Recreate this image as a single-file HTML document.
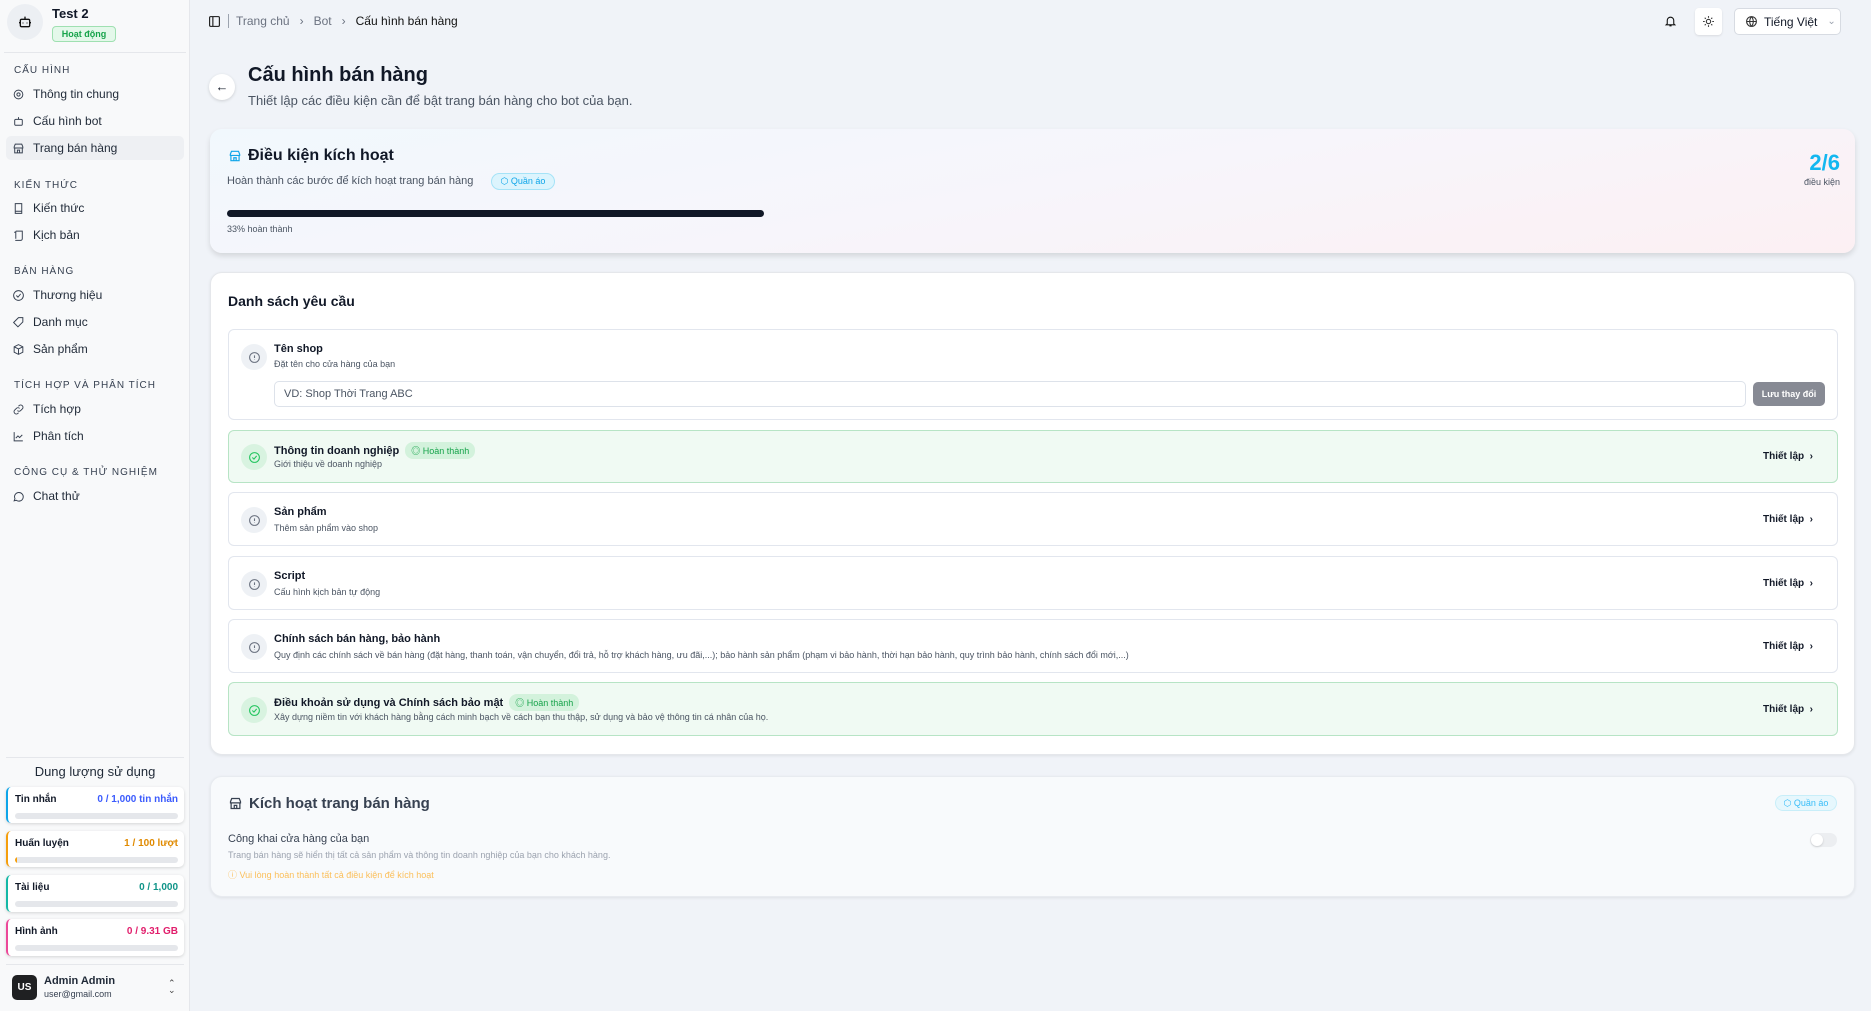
<!DOCTYPE html>
<html><head><meta charset="utf-8"><style>
*{box-sizing:border-box;margin:0;padding:0}
body{width:1871px;height:1011px;overflow:hidden;background:#f0f3f8;font-family:"Liberation Sans","Noto Sans CJK SC",sans-serif;color:#111827;position:relative}
.a{position:absolute}
.sb{left:0;top:0;width:190px;height:1011px;background:#f8f9fa;border-right:1px solid #e5e7eb}
.sec{position:absolute;left:14px;font-size:10px;letter-spacing:1px;color:#374151}
.it{position:absolute;left:12px;font-size:12px;color:#1f2937;display:flex;align-items:center;gap:8px}
.it svg{width:13px;height:13px;stroke:#374151;fill:none;stroke-width:1.8}
.ub{position:absolute;left:6px;width:178px;background:#fff;border-radius:5px;box-shadow:0 1px 3px rgba(0,0,0,.15);padding:7px 6px 0 7px}
.ub .r{display:flex;justify-content:space-between;font-size:10px;font-weight:bold}
.ub .t{height:6px;background:#e5e7eb;border-radius:3px;margin-top:8px}
.card{background:#fff;border:1px solid #e5e7eb;border-radius:12px}
.row{position:absolute;left:228px;width:1610px;border:1px solid #e2e6ee;border-radius:6px;background:#fff}
.row.g{background:#f0faf3;border-color:#b7e4c5}
.ic{position:absolute;left:12px;width:26px;height:26px;border-radius:50%;background:#eef1f5;display:flex;align-items:center;justify-content:center}
.g .ic{background:#d8f3e0}
.rt{position:absolute;left:45px;font-size:11px;font-weight:bold;display:flex;align-items:center;gap:6px}
.rs{position:absolute;left:45px;font-size:9px;color:#4b5563}
.tl{position:absolute;right:24px;font-size:10px;font-weight:bold;color:#111827}
.hb{font-size:9px;font-weight:normal;color:#16a34a;background:#d3f2dc;border-radius:8px;padding:2px 6px}
</style></head><body>
<div class="a sb"></div>
<div class="a" style="left:7px;top:4px;width:36px;height:36px;border-radius:50%;background:#eceff3;display:flex;align-items:center;justify-content:center">
<svg width="16" height="16" viewBox="0 0 24 24" fill="none" stroke="#111" stroke-width="2"><rect x="5" y="8" width="14" height="11" rx="2"/><path d="M12 4v4M9 13v1M15 13v1M3 13h2M19 13h2"/></svg></div>
<div class="a" style="left:52px;top:6px;font-size:13px;font-weight:bold">Test 2</div>
<div class="a" style="left:52px;top:26px;width:64px;height:16px;border:1px solid #9fe0b1;background:#e4f8ea;border-radius:4px;font-size:9px;font-weight:bold;color:#16a34a;text-align:center;line-height:14px">Hoạt động</div>
<div class="a" style="left:4px;top:52px;width:182px;height:1px;background:#e5e7eb"></div>
<div class="sec" style="top:65px">CẤU HÌNH</div>
<div class="it" style="top:87px"><svg viewBox="0 0 24 24"><circle cx="12" cy="12" r="3"/><circle cx="12" cy="12" r="8"/></svg>Thông tin chung</div>
<div class="it" style="top:114px"><svg viewBox="0 0 24 24"><rect x="5" y="8" width="14" height="11" rx="2"/><path d="M12 4v4"/></svg>Cấu hình bot</div>
<div class="a" style="left:6px;top:136px;width:178px;height:24px;background:#eef0f3;border-radius:5px"></div>
<div class="it" style="top:141px"><svg viewBox="0 0 24 24"><path d="M4 9l2-5h12l2 5v2H4zM5 11v9h14v-9M10 20v-5h4v5"/></svg>Trang bán hàng</div>
<div class="sec" style="top:180px">KIẾN THỨC</div>
<div class="it" style="top:201px"><svg viewBox="0 0 24 24"><path d="M6 3h12v18H6zM6 17h12"/></svg>Kiến thức</div>
<div class="it" style="top:228px"><svg viewBox="0 0 24 24"><path d="M7 4h12v14a3 3 0 0 1-3 3H6M7 4v14M4 6h3"/></svg>Kịch bản</div>
<div class="sec" style="top:266px">BÁN HÀNG</div>
<div class="it" style="top:288px"><svg viewBox="0 0 24 24"><circle cx="12" cy="12" r="9"/><path d="M8 12l3 3 5-6"/></svg>Thương hiệu</div>
<div class="it" style="top:315px"><svg viewBox="0 0 24 24"><path d="M3 12l9-9h8v8l-9 9z"/></svg>Danh mục</div>
<div class="it" style="top:342px"><svg viewBox="0 0 24 24"><path d="M12 3l8 4v10l-8 4-8-4V7zM4 7l8 4 8-4M12 11v10"/></svg>Sản phẩm</div>
<div class="sec" style="top:380px">TÍCH HỢP VÀ PHÂN TÍCH</div>
<div class="it" style="top:402px"><svg viewBox="0 0 24 24"><path d="M10 14a4 4 0 0 0 6 0l3-3a4 4 0 0 0-6-6l-1 1M14 10a4 4 0 0 0-6 0l-3 3a4 4 0 0 0 6 6l1-1"/></svg>Tích hợp</div>
<div class="it" style="top:429px"><svg viewBox="0 0 24 24"><path d="M4 4v16h16M7 15l4-4 3 3 5-5"/></svg>Phân tích</div>
<div class="sec" style="top:467px">CÔNG CỤ &amp; THỬ NGHIỆM</div>
<div class="it" style="top:489px"><svg viewBox="0 0 24 24"><path d="M4 20l1.5-4A8 8 0 1 1 8 19z"/></svg>Chat thử</div>

<div class="a" style="left:6px;top:757px;width:178px;height:1px;background:#e5e7eb"></div>
<div class="a" style="left:0;width:190px;top:764px;text-align:center;font-size:13px;color:#1f2937">Dung lượng sử dụng</div>
<div class="ub" style="top:787px;height:36px;border-left:2px solid #0ea5e9"><div class="r"><span>Tin nhắn</span><span style="color:#3b5bfd">0 / 1,000 tin nhắn</span></div><div class="t"></div></div>
<div class="ub" style="top:831px;height:36px;border-left:2px solid #f59e0b"><div class="r"><span>Huấn luyện</span><span style="color:#e08a00">1 / 100 lượt</span></div><div class="t" style="background:linear-gradient(90deg,#f59e0b 2px,#e5e7eb 2px)"></div></div>
<div class="ub" style="top:875px;height:37px;border-left:2px solid #14b8a6"><div class="r"><span>Tài liệu</span><span style="color:#0f9488">0 / 1,000</span></div><div class="t"></div></div>
<div class="ub" style="top:919px;height:37px;border-left:2px solid #ec4899"><div class="r"><span>Hình ảnh</span><span style="color:#e11d6b">0 / 9.31 GB</span></div><div class="t"></div></div>
<div class="a" style="left:6px;top:964px;width:178px;height:1px;background:#e5e7eb"></div>
<div class="a" style="left:12px;top:975px;width:25px;height:25px;border-radius:5px;background:#1f2022;color:#fff;font-size:10px;font-weight:bold;text-align:center;line-height:25px">US</div>
<div class="a" style="left:44px;top:975px;font-size:11px;font-weight:bold;color:#1f2937">Admin Admin</div>
<div class="a" style="left:44px;top:989px;font-size:9px;color:#374151">user@gmail.com</div>
<div class="a" style="left:168px;top:980px;font-size:9px;color:#444;line-height:7px">⌃<br>⌄</div>

<!-- top bar -->
<svg class="a" style="left:208px;top:15px" width="13" height="13" viewBox="0 0 24 24" fill="none" stroke="#111" stroke-width="2"><rect x="3" y="3" width="18" height="18" rx="2"/><path d="M9 3v18"/></svg>
<div class="a" style="left:228px;top:14px;width:1px;height:14px;background:#9ca3af"></div>
<div class="a" style="left:236px;top:14px;font-size:12px;color:#6b7280">Trang chủ &nbsp;&nbsp;›&nbsp;&nbsp; Bot &nbsp;&nbsp;›&nbsp;&nbsp; <span style="color:#111">Cấu hình bán hàng</span></div>
<svg class="a" style="left:1664px;top:14px" width="13" height="14" viewBox="0 0 24 24" fill="none" stroke="#111" stroke-width="2"><path d="M6 17V11a6 6 0 0 1 12 0v6l2 2H4zM10 21h4"/></svg>
<div class="a" style="left:1695px;top:8px;width:27px;height:27px;background:#fff;border-radius:4px;box-shadow:0 1px 2px rgba(0,0,0,.1);display:flex;align-items:center;justify-content:center"><svg width="13" height="13" viewBox="0 0 24 24" fill="none" stroke="#333" stroke-width="2"><circle cx="12" cy="12" r="4"/><path d="M12 2v3M12 19v3M2 12h3M19 12h3M5 5l2 2M17 17l2 2M5 19l2-2M17 7l2-2"/></svg></div>
<div class="a" style="left:1734px;top:8px;width:107px;height:27px;background:#fff;border:1px solid #d7dbe2;border-radius:5px;font-size:12px;display:flex;align-items:center;padding-left:10px;gap:6px"><svg width="13" height="13" viewBox="0 0 24 24" fill="none" stroke="#333" stroke-width="2"><circle cx="12" cy="12" r="9"/><path d="M3 12h18M12 3a14 14 0 0 1 0 18M12 3a14 14 0 0 0 0 18"/></svg>Tiếng Việt <span style="color:#9ca3af;font-size:10px;margin-left:4px">⌄</span></div>

<!-- title -->
<div class="a" style="left:209px;top:74px;width:26px;height:26px;border-radius:50%;background:#fff;box-shadow:0 1px 3px rgba(0,0,0,.15);text-align:center;line-height:25px;font-size:13px">←</div>
<div class="a" style="left:248px;top:64px;font-size:20px;font-weight:bold">Cấu hình bán hàng</div>
<div class="a" style="left:248px;top:93px;font-size:13px;color:#4b5563">Thiết lập các điều kiện cần để bật trang bán hàng cho bot của bạn.</div>

<!-- card 1 -->
<div class="a" style="left:210px;top:129px;width:1645px;height:124px;border-radius:12px;background:linear-gradient(170deg,#f1f8fd,#f7f5fb 50%,#fcf0f3);box-shadow:0 3px 6px rgba(0,0,0,.12)"></div>
<svg class="a" style="left:228px;top:149px" width="14" height="14" viewBox="0 0 24 24" fill="none" stroke="#0ea5e9" stroke-width="2"><path d="M4 9l2-5h12l2 5v2H4zM5 11v9h14v-9M10 20v-5h4v5"/></svg>
<div class="a" style="left:248px;top:147px;font-size:16px;font-weight:bold">Điều kiện kích hoạt</div>
<div class="a" style="left:227px;top:175px;font-size:11px;color:#4b5563">Hoàn thành các bước để kích hoạt trang bán hàng</div>
<div class="a" style="left:491px;top:173px;width:64px;height:17px;border:1px solid #a5e3f7;background:#dcf4fd;border-radius:9px;font-size:9px;color:#0ea5e9;text-align:center;line-height:15px">⬡ Quần áo</div>
<div class="a" style="left:227px;top:210px;width:537px;height:7px;border-radius:4px;background:#111827"></div>
<div class="a" style="left:227px;top:224px;font-size:9px;color:#4b5563">33% hoàn thành</div>
<div class="a" style="left:1760px;top:150px;width:80px;text-align:right;font-size:22px;font-weight:bold;color:#13b7f0">2/6</div>
<div class="a" style="left:1760px;top:177px;width:80px;text-align:right;font-size:9px;color:#4b5563">điều kiện</div>

<!-- card 2 -->
<div class="a card" style="left:210px;top:272px;width:1645px;height:483px;box-shadow:0 1px 3px rgba(0,0,0,.08)"></div>
<div class="a" style="left:228px;top:293px;font-size:14px;font-weight:bold">Danh sách yêu cầu</div>

<div class="row" style="top:329px;height:91px"><div class="ic" style="top:14px"><svg width="13" height="13" viewBox="0 0 24 24" fill="none" stroke="#6b7280" stroke-width="2"><circle cx="12" cy="12" r="9"/><path d="M12 8v5M12 16v.5"/></svg></div>
<div class="rt" style="top:13px">Tên shop</div><div class="rs" style="top:29px">Đặt tên cho cửa hàng của bạn</div>
<div class="a" style="left:45px;top:51px;width:1472px;height:26px;border:1px solid #dde2ea;border-radius:5px;font-size:11px;color:#4b5563;padding-left:9px;line-height:24px">VD: Shop Thời Trang ABC</div>
<div class="a" style="left:1524px;top:52px;width:72px;height:24px;background:#878a94;border-radius:5px;color:#fff;font-size:9px;font-weight:bold;text-align:center;line-height:24px">Lưu thay đổi</div></div>

<div class="row g" style="top:430px;height:53px"><div class="ic" style="top:13px"><svg width="13" height="13" viewBox="0 0 24 24" fill="none" stroke="#22c55e" stroke-width="2"><circle cx="12" cy="12" r="9"/><path d="M8 12l3 3 5-6"/></svg></div>
<div class="rt" style="top:11px">Thông tin doanh nghiệp <span class="hb">◎ Hoàn thành</span></div><div class="rs" style="top:28px">Giới thiệu về doanh nghiệp</div><div class="tl" style="top:20px">Thiết lập &nbsp;›</div></div>

<div class="row" style="top:492px;height:54px"><div class="ic" style="top:14px"><svg width="13" height="13" viewBox="0 0 24 24" fill="none" stroke="#6b7280" stroke-width="2"><circle cx="12" cy="12" r="9"/><path d="M12 8v5M12 16v.5"/></svg></div>
<div class="rt" style="top:13px">Sản phẩm</div><div class="rs" style="top:30px">Thêm sản phẩm vào shop</div><div class="tl" style="top:21px">Thiết lập &nbsp;›</div></div>

<div class="row" style="top:556px;height:54px"><div class="ic" style="top:14px"><svg width="13" height="13" viewBox="0 0 24 24" fill="none" stroke="#6b7280" stroke-width="2"><circle cx="12" cy="12" r="9"/><path d="M12 8v5M12 16v.5"/></svg></div>
<div class="rt" style="top:13px">Script</div><div class="rs" style="top:30px">Cấu hình kịch bản tự động</div><div class="tl" style="top:21px">Thiết lập &nbsp;›</div></div>

<div class="row" style="top:619px;height:54px"><div class="ic" style="top:14px"><svg width="13" height="13" viewBox="0 0 24 24" fill="none" stroke="#6b7280" stroke-width="2"><circle cx="12" cy="12" r="9"/><path d="M12 8v5M12 16v.5"/></svg></div>
<div class="rt" style="top:13px">Chính sách bán hàng, bảo hành</div><div class="rs" style="top:30px">Quy định các chính sách về bán hàng (đặt hàng, thanh toán, vận chuyển, đổi trả, hỗ trợ khách hàng, ưu đãi,...); bảo hành sản phẩm (phạm vi bảo hành, thời hạn bảo hành, quy trình bảo hành, chính sách đổi mới,...)</div><div class="tl" style="top:21px">Thiết lập &nbsp;›</div></div>

<div class="row g" style="top:682px;height:54px"><div class="ic" style="top:14px"><svg width="13" height="13" viewBox="0 0 24 24" fill="none" stroke="#22c55e" stroke-width="2"><circle cx="12" cy="12" r="9"/><path d="M8 12l3 3 5-6"/></svg></div>
<div class="rt" style="top:11px">Điều khoản sử dụng và Chính sách bảo mật <span class="hb">◎ Hoàn thành</span></div><div class="rs" style="top:29px">Xây dựng niềm tin với khách hàng bằng cách minh bạch về cách bạn thu thập, sử dụng và bảo vệ thông tin cá nhân của họ.</div><div class="tl" style="top:21px">Thiết lập &nbsp;›</div></div>

<!-- card 3 -->
<div class="a" style="left:210px;top:776px;width:1645px;height:121px;border-radius:12px;background:#f8fafc;border:1px solid #e8ebf0;box-shadow:0 1px 3px rgba(0,0,0,.08)"></div>
<svg class="a" style="left:228px;top:796px" width="15" height="15" viewBox="0 0 24 24" fill="none" stroke="#374151" stroke-width="2"><path d="M4 9l2-5h12l2 5v2H4zM5 11v9h14v-9M10 20v-5h4v5"/></svg>
<div class="a" style="left:249px;top:795px;font-size:15px;color:#374151;font-weight:bold">Kích hoạt trang bán hàng</div>
<div class="a" style="left:1775px;top:795px;width:62px;height:16px;border:1px solid #c8eef9;background:#e6f7fd;border-radius:8px;font-size:9px;color:#38bdf8;text-align:center;line-height:14px">⬡ Quần áo</div>
<div class="a" style="left:228px;top:833px;font-size:11px;color:#374151">Công khai cửa hàng của bạn</div>
<div class="a" style="left:228px;top:850px;font-size:9px;color:#9ca3af">Trang bán hàng sẽ hiển thị tất cả sản phẩm và thông tin doanh nghiệp của bạn cho khách hàng.</div>
<div class="a" style="left:228px;top:868px;font-size:9px;color:#fbbf5a">ⓘ Vui lòng hoàn thành tất cả điều kiện để kích hoạt</div>
<div class="a" style="left:1810px;top:833px;width:27px;height:14px;border-radius:7px;background:#eceef1"><div style="width:12px;height:12px;border-radius:50%;background:#fff;margin:1px;box-shadow:0 1px 2px rgba(0,0,0,.15)"></div></div>
</body></html>
